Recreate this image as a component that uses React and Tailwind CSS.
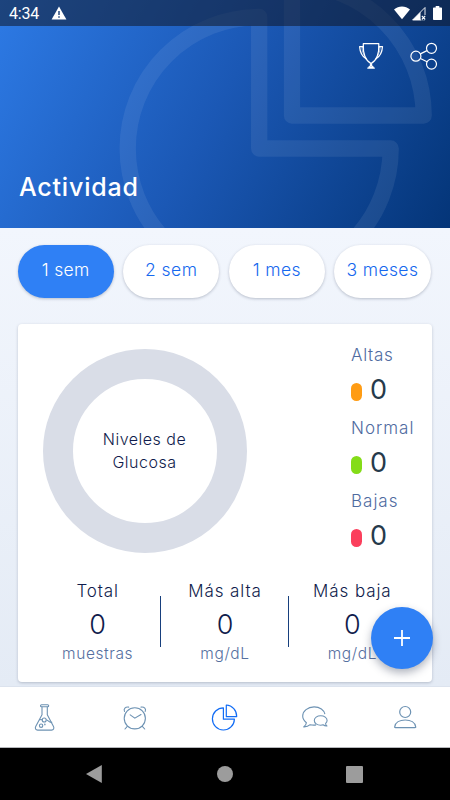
import clsx from 'clsx';

const ranges = [
  { label: '1 sem', tracking: 'tracking-[0.35px]', active: true },
  { label: '2 sem', tracking: 'tracking-[0.45px]' },
  { label: '1 mes', tracking: 'tracking-[0.35px]' },
  { label: '3 meses', tracking: 'tracking-[0.4px]' },
];

const levels = [
  { label: 'Altas', value: 0, dot: 'bg-[#ff9c14]', tracking: 'tracking-[0.7px]' },
  { label: 'Normal', value: 0, dot: 'bg-[#84dc18]', tracking: 'tracking-[1px]' },
  { label: 'Bajas', value: 0, dot: 'bg-[#fb3f5c]', tracking: 'tracking-[1px]' },
];

const stats = [
  { label: 'Total', value: 0, unit: 'muestras', labelTracking: 'tracking-[0.9px]', unitTracking: 'tracking-[0.6px]' },
  { label: 'Más alta', value: 0, unit: 'mg/dL', labelTracking: 'tracking-[0.9px]', unitTracking: 'tracking-[0.6px]' },
  { label: 'Más baja', value: 0, unit: 'mg/dL', labelTracking: 'tracking-[0.9px]', unitTracking: 'tracking-[0.6px]' },
];

const tabs = [
  { id: 'lab', icon: FlaskIcon },
  { id: 'reminders', icon: AlarmIcon },
  { id: 'activity', icon: PieIcon, active: true },
  { id: 'chat', icon: ChatIcon },
  { id: 'profile', icon: UserIcon },
];

function FlaskIcon() {
  return (
    <svg width="30" height="30" viewBox="0 0 30 30" fill="none" stroke="currentColor" strokeWidth="1.1" strokeLinejoin="round">
      <rect x="10.5" y="2.7" width="8.2" height="2" rx="1" />
      <path d="M12 4.8v8L5.7 24.5c-.9 1.9 0 3.6 1.9 3.6h14c1.9 0 2.8-1.7 1.9-3.6L17.3 12.8v-8" />
      <path d="M9.4 18c1.2-.7 2.2-.6 3.2.1M16.4 18c1.6-.5 2.2 2.9 5.8 2.3" />
      <circle cx="14.2" cy="18" r="2" />
      <circle cx="11.1" cy="23.7" r="1.7" />
      <circle cx="14.8" cy="22.4" r=".3" />
    </svg>
  );
}

function AlarmIcon() {
  return (
    <svg width="30" height="30" viewBox="0 0 30 30" fill="none" stroke="currentColor" strokeWidth="1.1" strokeLinecap="round">
      <circle cx="14.8" cy="16.3" r="10.6" />
      <path d="M10.2 12.9l4.6 3.3 6.2-3.7M7.3 24.4L5 27M22.3 24.4l2.4 2.6" />
      <path d="M4.5 9.4C3.3 6.7 5.3 4.7 8.700 5.100M25.200 9.400c1.200-2.700-.8-4.700-4.200-4.300" />
    </svg>
  );
}

function PieIcon() {
  return (
    <svg width="30" height="30" viewBox="0 0 30 30" fill="none" stroke="currentColor" strokeWidth="1.2" strokeLinejoin="round">
      <path d="M13.4 5.8v11.4h11A11 11.1 0 1 1 13.4 5.8z" />
      <path d="M16.3 3v11.6h10.4A11 11.3 0 0 0 16.3 3z" />
    </svg>
  );
}

function ChatIcon() {
  return (
    <svg width="30" height="30" viewBox="0 0 30 30" fill="none" stroke="currentColor" strokeWidth="1.1" strokeLinejoin="round">
      <path d="M24.9 12.2C24.2 8 19.8 4.9 14.1 4.9 7.700 4.900 2.700 9 2.700 14c0 2.800 1.500 4.900 3.700 6.700-.2 1.700-1.200 3-2.700 4.200 2.800.1 4.800-.7 6.500-2.200 2 .5 4 .6 5.900.2" />
      <path d="M20.7 13.7c-3.6 0-6.4 2.1-6.4 4.8s2.8 4.7 6.4 4.7c.9 0 1.6-.1 2.4-.4 1.1.9 2.3 1.3 3.8 1.2-.8-.7-1.3-1.6-1.3-2.6 1-.8 1.500-1.800 1.500-2.900 0-2.700-2.800-4.800-6.400-4.800z" />
    </svg>
  );
}

function UserIcon() {
  return (
    <svg width="30" height="30" viewBox="0 0 30 30" fill="none" stroke="currentColor" strokeWidth="1.2" strokeLinejoin="round">
      <circle cx="15.2" cy="10" r="5.5" />
      <path d="M5.4 25.7c-.6 0-.8-.3-.7-.9C5.4 20.7 9.6 18 15.2 18s9.8 2.7 10.5 6.8c.1.6-.1.9-.7.9z" />
    </svg>
  );
}

function TrophyIcon() {
  return (
    <svg width="26" height="28" viewBox="0 0 26 28" fill="none" stroke="currentColor" strokeWidth="1.2" strokeLinejoin="round">
      <path d="M5.3 1.7h15.5c.4 9.5-1.5 16.5-7.75 19.8C6.8 18.2 4.9 11.2 5.3 1.7z" />
      <path d="M5.3 4.6H1.6C1.9 10 4 14.3 8.4 17.1M20.8 4.6h3.7C24.2 10 22.1 14.3 17.7 17.1" />
      <path d="M5.4 5.3H3.9c.3 4 1.3 6.9 3.1 9M20.7 5.3h1.5c-.3 4-1.3 6.9-3.1 9" strokeWidth=".6" />
      <path d="M12 21.5l2.700 3.300M14.100 21.500l-2.700 3.300M10.300 25.200h5.500M9.300 26.200h7.500" />
    </svg>
  );
}

function ShareIcon() {
  return (
    <svg width="28" height="28" viewBox="0 0 28 28" fill="none" stroke="currentColor" strokeWidth="1.2">
      <circle cx="5.9" cy="14.2" r="5" />
      <circle cx="21.5" cy="6.3" r="5" />
      <circle cx="21.5" cy="22.1" r="5" />
      <path d="M10.4 11.9L17 8.6M10.4 16.5l6.6 3.3" />
    </svg>
  );
}

function StatusBar() {
  return (
    <div className="relative flex h-[26px] items-center bg-[#101828]/55 pl-[9px] pr-2 text-white">
      <span className="mt-0.5 font-[Roboto,sans-serif] text-[16px] font-normal leading-none tracking-[-0.2px]">4:34</span>
      <svg className="ml-3" width="16" height="14" viewBox="0 0 16 14">
        <path d="M8 .6L15.4 13.500H.6z" fill="currentColor" />
        <path d="M7.300 5h1.400v4H7.300zM7.300 10.300h1.400v1.500H7.300z" fill="#173d74" />
      </svg>
      <svg className="ml-auto" width="16" height="14" viewBox="0 0 16 14">
        <path d="M0 3.5C4.7-.6 11.3-.6 16 3.5L8 13.200z" fill="currentColor" />
      </svg>
      <svg className="ml-0.5" width="15" height="15" viewBox="0 0 15 15">
        <path d="M13 1.500v12.500H.6z" fill="none" stroke="currentColor" strokeWidth=".9" />
        <path d="M8.500 6v8H.6z" fill="currentColor" />
        <path d="M9 9h5v5.500H9z" fill="#0b2a59" />
        <path d="M9.800 9.900l3.400 3.600m0-3.600l-3.400 3.600" stroke="currentColor" strokeWidth="1.1" />
      </svg>
      <svg className="ml-[6px]" width="9" height="14" viewBox="0 0 9 14">
        <path d="M2.700 0h3.600v1.400h1.900c.5 0 .8.3.8.8v11c0 .5-.3.8-.8.8H.8c-.5 0-.8-.3-.8-.8v-11c0-.5.3-.8.8-.8h1.900z" fill="currentColor" />
      </svg>
    </div>
  );
}

function Header() {
  return (
    <header className="relative flex h-[228px] flex-col overflow-hidden bg-[linear-gradient(118deg,#2d7ae5_0%,#1b58b5_48%,#043578_100%)] text-white">
      {/* Oversized chart watermark behind the bar */}
      <svg className="absolute inset-0" width="450" height="228" viewBox="0 0 450 228" fill="none">
        <g stroke="#fff" strokeOpacity=".075" strokeWidth="16.3" strokeLinejoin="round">
          <path d="M259.2 17V148.5H390.7A131.5 131.5 0 1 1 259.2 17z" />
          <path d="M292 115.5H423.7A131.6 131.6 0 0 0 292-16z" />
        </g>
      </svg>
      <StatusBar />
      <div className="relative flex items-center justify-end gap-[26px] pr-3 pt-4">
        <TrophyIcon />
        <ShareIcon />
      </div>
      <h1 className="relative mt-auto mb-[25px] pl-[19px] text-[25px] font-medium leading-8 tracking-[0.8px]">Actividad</h1>
    </header>
  );
}

function RangePill({ label, tracking, active }) {
  return (
    <button
      className={clsx(
        'h-[53px] flex-1 whitespace-nowrap rounded-full pb-[3px] text-[17.5px] shadow-[0_1px_3px_rgba(40,50,80,0.28)]',
        tracking,
        active ? 'bg-[#2f80f5] text-white' : 'bg-white text-[#1668ee]'
      )}
    >
      {label}
    </button>
  );
}

function GlucoseCard() {
  return (
    <section className="mx-[18px] mt-[26px] flex h-[358px] flex-col rounded bg-white shadow-[0_1px_3px_rgba(40,50,80,0.25)]">
      <div className="flex h-[237px]">
        <div className="ml-[24.5px] mt-[25px] flex h-[204px] w-[204px] items-center justify-center rounded-full border-[30.5px] border-[#d9dde7]">
          <p className="text-center text-[16px] leading-[23px] tracking-[0.5px] text-[#101c4c]">
            Niveles de
            <br />
            Glucosa
          </p>
        </div>
        <ul className="ml-[104.5px] mt-[19px]">
          {levels.map(({ label, value, dot, tracking }) => (
            <li key={label} className="h-[73px]">
              <p className={clsx('text-[17px] leading-6 text-[#4f6b9f]', tracking)}>{label}</p>
              <div className="mt-[7px] flex h-8 items-center">
                <span className={clsx('mt-1 h-[17.5px] w-[11px] rounded-full', dot)} />
                <span className="ml-2 text-[27px] font-normal leading-8 text-[#263a4b]">{value}</span>
              </div>
            </li>
          ))}
        </ul>
      </div>

      <dl className="mt-[18px] grid grid-cols-3 px-4 text-center">
        {stats.map(({ label, value, unit, labelTracking, unitTracking }, i) => (
          <div key={label} className="relative flex flex-col items-center">
            {i > 0 && <span className="absolute -left-px top-[17px] h-[51px] w-px bg-[#173f7d]" />}
            <dt className={clsx('text-[17px] leading-6 text-[#101c4c]', labelTracking)}>{label}</dt>
            <dd className="mt-[6px] text-[27px] leading-8 text-[#101c4c]">{value}</dd>
            <dd className={clsx('mt-[1px] text-[15.5px] leading-6 text-[#56709f]', unitTracking)}>{unit}</dd>
          </div>
        ))}
      </dl>
    </section>
  );
}

export default function App() {
  return (
    <div className="relative flex h-[800px] w-[450px] flex-col overflow-hidden bg-[linear-gradient(#f2f6fd_228px,#e4ebf5_686px)] font-[Inter,'Liberation_Sans',sans-serif] font-light">
      <Header />

      <main className="flex-1">
        <div className="flex gap-[9.3px] pl-[17.5px] pr-[19.5px] pt-[17px]">
          {ranges.map((range) => (
            <RangePill key={range.label} {...range} />
          ))}
        </div>
        <GlucoseCard />
      </main>

      <button className="absolute left-[371px] top-[607px] flex h-[62px] w-[62px] items-center justify-center rounded-full bg-[#2f80f5] text-white shadow-[0_4px_8px_rgba(30,40,70,0.35)]">
        <svg width="16" height="16" viewBox="0 0 16 16" stroke="currentColor" strokeWidth="1.8">
          <path d="M8 0v16M0 8h16" />
        </svg>
      </button>

      <nav className="flex h-[62px] border-b border-t border-b-[#b5b7bb] border-t-[#dce3ee] bg-white">
        {tabs.map(({ id, icon: Icon, active }) => (
          <button
            key={id}
            aria-label={id}
            className={clsx('flex flex-1 items-center justify-center', active ? 'text-[#116cf5]' : 'text-[#6d92b3]')}
          >
            <Icon />
          </button>
        ))}
      </nav>

      <div className="flex h-[52px] items-center bg-black text-[#9c9c9c]">
        <svg className="ml-[85px]" width="18" height="20" viewBox="0 0 18 20" fill="currentColor">
          <path d="M16.8 1v18L1 10z" />
        </svg>
        <span className="ml-[114px] h-4 w-4 rounded-full bg-[#9c9c9c]" />
        <span className="ml-[113px] h-[17px] w-[17px] rounded-[1px] bg-[#9c9c9c]" />
      </div>
    </div>
  );
}
